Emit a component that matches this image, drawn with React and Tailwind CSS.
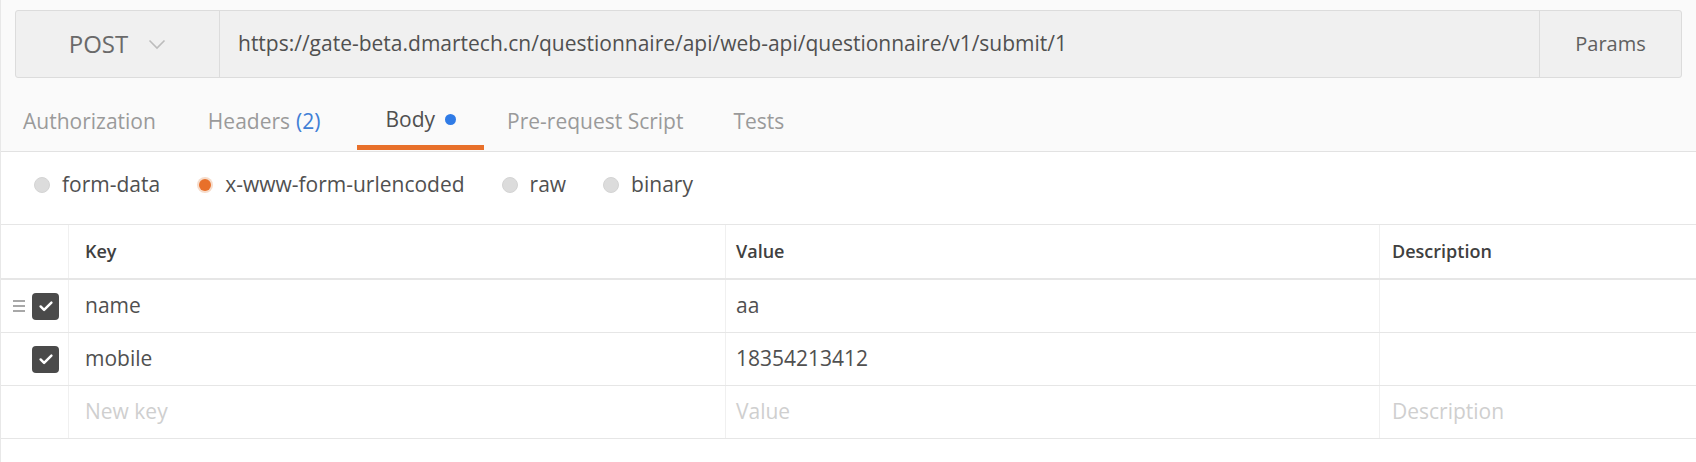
import React from "react";

function Radio({ checked }) {
  return checked ? (
    <span className="flex h-[16px] w-[16px] items-center justify-center rounded-full bg-[#f6dccb]">
      <span className="h-[12px] w-[12px] rounded-full bg-[#e8702a]" />
    </span>
  ) : (
    <span className="h-[16px] w-[16px] rounded-full border border-[#d4d4d4] bg-[#dcdcdc]" />
  );
}

function Check() {
  return (
    <span className="flex h-[27px] w-[27px] items-center justify-center rounded-[4px] bg-[#4a4a4a]">
      <svg width="18" height="18" viewBox="0 0 16 16" fill="none">
        <path d="M3.2 8.4l3.1 3.1L12.8 5" stroke="#fff" strokeWidth="2.2" strokeLinecap="round" strokeLinejoin="round" />
      </svg>
    </span>
  );
}

function Handle() {
  return (
    <span className="flex w-[12px] flex-col gap-[3px]">
      <span className="h-[2px] w-full bg-[#a8a8a8]" />
      <span className="h-[2px] w-full bg-[#a8a8a8]" />
      <span className="h-[2px] w-full bg-[#a8a8a8]" />
    </span>
  );
}

function Row({ handle, checked, k, v, d, placeholder }) {
  const txt = placeholder ? "text-[#cfcfcf]" : "text-[#505050]";
  return (
    <div className="flex h-[53px] border-b border-[#e6e6e6]">
      <div className="flex w-[68px] shrink-0 items-center border-r border-[#f0f0f0] pl-[12px]">
        {handle ? <Handle /> : <span className="w-[12px]" />}
        <span className="ml-[7px]">{checked ? <Check /> : null}</span>
      </div>
      <div className={`flex w-[657px] shrink-0 items-center border-r border-[#f0f0f0] pl-[16px] text-[21px] ${txt}`}>{k}</div>
      <div className={`flex w-[654px] shrink-0 items-center border-r border-[#f0f0f0] pl-[10px] text-[21px] ${txt}`}>{v}</div>
      <div className={`flex flex-1 items-center pl-[12px] text-[21px] ${txt}`}>{d}</div>
    </div>
  );
}

export default function App() {
  return (
    <div className="h-[462px] w-[1696px] overflow-hidden border-l border-[#e8e8e8] bg-white" style={{ fontFamily: '"Open Sans", "Noto Sans", sans-serif' }}>
      <div className="bg-[#fafafa]">
        <div className="px-[14px] pt-[10px]">
          <div className="flex h-[68px] rounded-[3px] border border-[#dcdcdc] bg-[#f0f0f0]">
            <div className="flex w-[204px] shrink-0 items-center justify-center gap-[20px] border-r border-[#dcdcdc]">
              <span className="text-[24px] text-[#6a6a6a]">POST</span>
              <svg width="18" height="11" viewBox="0 0 18 11" fill="none">
                <path d="M1.5 1.5L9 9l7.5-7.5" stroke="#bcbcbc" strokeWidth="1.6" />
              </svg>
            </div>
            <div className="flex flex-1 items-center pl-[18px] text-[21px] text-[#505050]">
              https://gate-beta.dmartech.cn/questionnaire/api/web-api/questionnaire/v1/submit/1
            </div>
            <div className="flex w-[142px] shrink-0 items-center justify-center border-l border-[#dcdcdc] text-[20px] text-[#606060]">
              Params
            </div>
          </div>
        </div>
        <div className="flex h-[74px] border-b border-[#e2e2e2] pl-[22px] text-[21px] text-[#9a9a9a]">
          <div className="flex items-center pt-[15px]">Authorization</div>
          <div className="ml-[52px] flex items-center pt-[15px]">
            <span>Headers</span>
            <span className="ml-[6px] text-[#3f80d6]">(2)</span>
          </div>
          <div className="mb-[1px] ml-[37px] flex items-center border-b-[5px] border-[#e8702a] px-[28px] pt-[16px] text-[#505050]">
            <span>Body</span>
            <span className="ml-[10px] h-[11px] w-[11px] rounded-full bg-[#2f7be6]" />
          </div>
          <div className="ml-[23px] flex items-center pt-[15px]">Pre-request Script</div>
          <div className="ml-[50px] flex items-center pt-[15px]">Tests</div>
        </div>
      </div>
      <div className="flex h-[72px] items-center gap-[37px] pb-[6px] pl-[33px] text-[21px] text-[#505050]">
        <label className="flex items-center gap-[12px]"><Radio /><span>form-data</span></label>
        <label className="flex items-center gap-[12px]"><Radio checked /><span>x-www-form-urlencoded</span></label>
        <label className="flex items-center gap-[12px]"><Radio /><span>raw</span></label>
        <label className="flex items-center gap-[12px]"><Radio /><span>binary</span></label>
      </div>
      <div className="border-t border-[#e6e6e6]">
        <div className="flex h-[55px] border-b-2 border-[#e6e6e6] text-[18px] font-semibold text-[#404040]">
          <div className="w-[68px] shrink-0 border-r border-[#f0f0f0]" />
          <div className="flex w-[657px] shrink-0 items-center border-r border-[#f0f0f0] pl-[16px]">Key</div>
          <div className="flex w-[654px] shrink-0 items-center border-r border-[#f0f0f0] pl-[10px]">Value</div>
          <div className="flex flex-1 items-center pl-[12px]">Description</div>
        </div>
        <Row handle checked k="name" v="aa" d="" />
        <Row checked k="mobile" v="18354213412" d="" />
        <Row placeholder k="New key" v="Value" d="Description" />
      </div>
    </div>
  );
}
